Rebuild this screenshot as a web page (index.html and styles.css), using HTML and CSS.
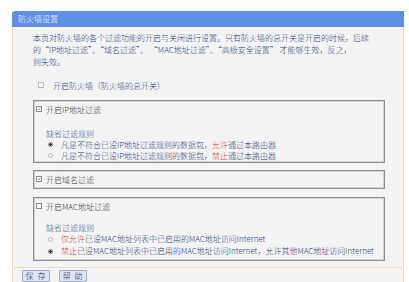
FILE: index.html
```html
<!DOCTYPE html>
<html lang="zh-CN">
<head>
<meta charset="utf-8">
<title>防火墙设置</title>
<link rel="stylesheet" href="styles.css">
</head>
<body>
<div class="panel">
  <div class="panel-title">防火墙设置</div>
  <div class="panel-body">
    <p class="intro">本页对防火墙的各个过滤功能的开启与关闭进行设置。只有防火墙的总开关是开启的时候，后续<br>的“IP地址过滤”、“域名过滤”、 “MAC地址过滤”、“高级安全设置” 才能够生效，反之，<br>则失效。</p>
    <div class="master"><span class="cb cb-light"></span><span class="master-label">开启防火墙（防火墙的总开关）</span></div>

    <div class="box">
      <div class="box-head"><span class="cb checked"><svg viewBox="0 0 5 5"><path d="M1 2.5 L2.1 3.6 L4 1.2" fill="none" stroke="#555" stroke-width="0.8"/></svg></span>开启IP地址过滤</div>
      <div class="rules">
        <div class="rules-title">缺省过滤规则</div>
        <div class="rule"><span class="radio on"></span><span>凡是不符合已设IP地址过滤规则的数据包，<em>允许</em>通过本路由器</span></div>
        <div class="rule"><span class="radio"></span><span>凡是不符合已设IP地址过滤规则的数据包，<em>禁止</em>通过本路由器</span></div>
      </div>
    </div>

    <div class="box box-short">
      <div class="box-head"><span class="cb checked"><svg viewBox="0 0 5 5"><path d="M1 2.5 L2.1 3.6 L4 1.2" fill="none" stroke="#555" stroke-width="0.8"/></svg></span>开启域名过滤</div>
    </div>

    <div class="box box-mac">
      <div class="box-head"><span class="cb"></span>开启MAC地址过滤</div>
      <div class="rules rules-mac">
        <div class="rules-title">缺省过滤规则</div>
        <div class="rule"><span class="radio"></span><span><em>仅允许</em>已设MAC地址列表中已启用的MAC地址访问Internet</span></div>
        <div class="rule"><span class="radio on"></span><span><em>禁止</em>已设MAC地址列表中已启用的MAC地址访问Internet，允许其他MAC地址访问Internet</span></div>
      </div>
    </div>
  </div>
  <div class="panel-foot">
    <button class="btn" type="button">保 存</button>
    <button class="btn" type="button">帮 助</button>
  </div>
</div>
</body>
</html>
```
FILE: styles.css
```css
html, body {
  margin: 0;
  padding: 0;
  background: #ffffff;
  overflow: hidden;
}
body {
  font-family: "Noto Sans CJK SC", "Noto Sans", sans-serif;
  font-size: 8px;
  color: #2d3f78;
}
.panel {
  margin: 11px 0 0 12px;
  width: 390px;
  background: #f4f4f4;
  border: 1px solid #e9dcc2;
  border-top: none;
}
.panel-title {
  height: 16px;
  line-height: 15px;
  background: #5f90e4;
  color: #ffffff;
  padding-left: 6px;
  border-radius: 4px 0 0 0;
  margin: 0 -1px;
  font-weight: 300;
}
.panel-body {
  padding: 5px 18px 0 20px;
}
.intro {
  margin: 0;
  line-height: 12px;
  font-weight: 300;
  white-space: nowrap;
}
.master {
  display: flex;
  align-items: center;
  margin-top: 11px;
  height: 12px;
  padding-left: 5px;
}
.master-label {
  margin-left: 9px;
  font-weight: 300;
}
.cb {
  display: inline-flex;
  box-sizing: border-box;
  width: 6px;
  height: 6px;
  border: 1px solid #8c8c8c;
  background: #fafafa;
  margin-right: 4px;
  flex: none;
}
.cb-light {
  border-color: #b8b8b8;
  margin-right: 0;
}
.cb svg {
  width: 4px;
  height: 4px;
  display: block;
}
.box {
  margin-top: 9px;
  border: 1px solid #8e8e8e;
  box-shadow: inset 0 0 0 1px #d2d2d2;
  padding: 2px 2px 1px 2px;
}
.box-short {
  margin-top: 7px;
  padding-bottom: 3px;
}
.box-mac {
  margin-top: 8px;
  padding-bottom: 3px;
}
.box-head {
  display: flex;
  align-items: center;
  height: 12px;
  color: #3a3a4a;
  font-weight: 300;
}
.rules {
  padding-left: 10px;
  margin-top: 13px;
}
.rules-mac {
  margin-top: 10px;
}
.rules-title {
  line-height: 11px;
  color: #3b518f;
  font-weight: 300;
}
.rule {
  display: flex;
  align-items: center;
  line-height: 11px;
  padding-left: 2px;
  font-weight: 300;
  white-space: nowrap;
}
.rules-mac .rule {
  line-height: 12px;
}
.rule em {
  font-style: normal;
  color: #e2403f;
}
.radio {
  display: inline-block;
  box-sizing: border-box;
  width: 5px;
  height: 5px;
  border-radius: 50%;
  border: 1px solid #b4b4b4;
  background: #ffffff;
  margin-right: 8px;
  flex: none;
}
.radio.on {
  border-color: #7a7a7a;
  background: radial-gradient(circle, #333 0 1.2px, #ffffff 1.4px);
}
.panel-foot {
  margin-top: 6px;
  border-top: 1px solid #e9dcc2;
  padding: 2px 0 4px 9px;
  display: flex;
  gap: 9px;
}
.btn {
  font-family: inherit;
  font-size: 8px;
  font-weight: 300;
  color: #23356e;
  height: 12px;
  line-height: 10px;
  width: 28px;
  padding: 0;
  background: #dfe5f2;
  border: 1px solid #9eabc8;
  border-radius: 1px;
  letter-spacing: 1px;
}
```
